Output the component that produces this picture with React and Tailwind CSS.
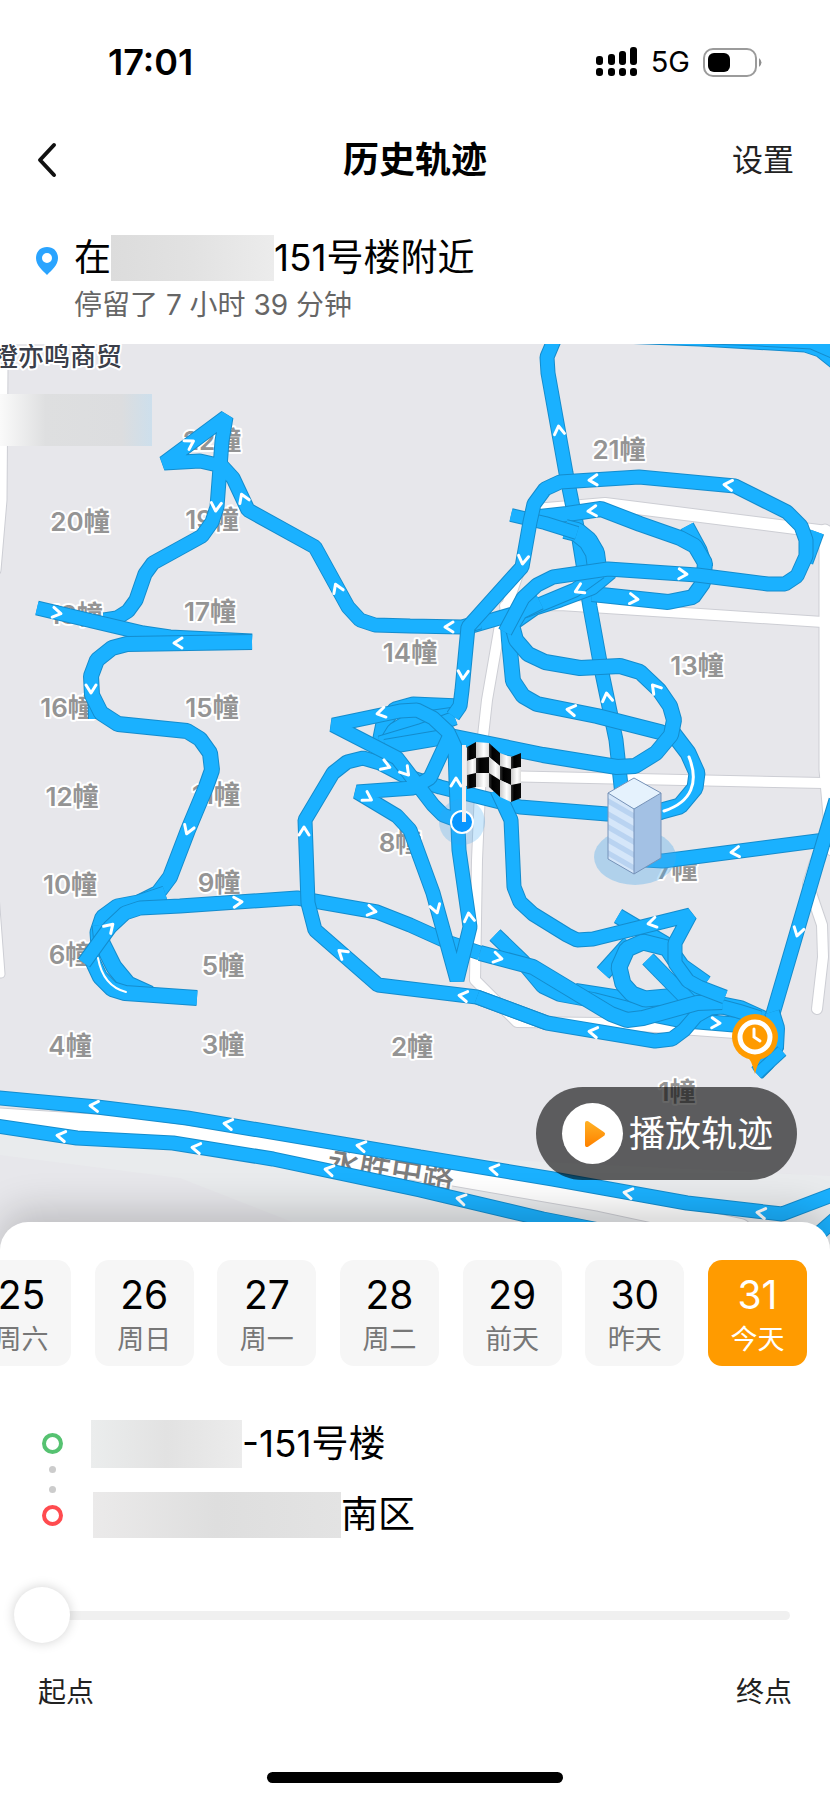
import { useState } from 'react'

const FONT = 'font-["Inter","Noto_Sans_CJK_SC",sans-serif]'

const DAYS = [
    { day: '25', label: '周六' },
    { day: '26', label: '周日' },
    { day: '27', label: '周一' },
    { day: '28', label: '周二' },
    { day: '29', label: '前天' },
    { day: '30', label: '昨天' },
    { day: '31', label: '今天' },
]

const ROADS = [
    { d: 'M2 370 L1 500 L-5 570', w: 11 },
    { d: 'M-5 895 L1 974', w: 7 },
    { d: 'M535 510 L605 504 L827 532', w: 12 },
    { d: 'M825 530 V770 L832 850', w: 11 },
    { d: 'M505 606 L560 605 L700 614 L823 622', w: 10 },
    { d: 'M500 776 L823 783', w: 10 },
    { d: 'M523 560 L500 625 L487 700 L482 745 L477 860 L475 980 L517 1022 L600 1023 L735 1033', w: 10 },
    { d: 'M815 862 L808 884 L822 925 L823 957 L817 1009', w: 10 },
    { d: 'M-10 1119 L117 1127 L283 1150 L450 1174 L600 1200 L740 1230', w: 22 },
]

const LABELS = [
    ['22幢', 212, 441],
    ['21幢', 619, 450],
    ['20幢', 80, 522],
    ['19幢', 212, 520],
    ['18幢', 76, 615],
    ['17幢', 210, 612],
    ['14幢', 410, 653],
    ['13幢', 697, 666],
    ['16幢', 67, 708],
    ['15幢', 212, 708],
    ['12幢', 72, 797],
    ['11幢', 216, 795],
    ['8幢', 400, 843],
    ['10幢', 70, 885],
    ['9幢', 219, 883],
    ['7幢', 677, 870],
    ['6幢', 70, 955],
    ['5幢', 223, 966],
    ['4幢', 70, 1046],
    ['3幢', 223, 1045],
    ['2幢', 412, 1047],
    ['1幢', 677, 1092],
]

// drawn in order, later pieces lie on top
const TRACKS = [
    // north-south line and top edge
    { d: 'M622 795 L616 740 L602 673 L590 607 L577 527 L566 473 L548 373 L547 357 L555 338 L565 328' },
    { d: 'M620 336 L700 339 L805 345 L820 350 L840 366' },
    { d: 'M640 334 L760 339 L812 342 L835 352' },
    // 13 block loops
    { d: 'M687 526 L700 550 L706 568' },
    { d: 'M817 532 L806 562' },
    { d: 'M530 518 L567 514 L601 509 L640 524 L680 538 L695 546 L705 563 L703 583 L693 597 L668 602 L592 594', w: 16 },
    { d: 'M565 529 L577 532 L588 541 L595 553 L597 568 L594 576', w: 20 },
    { d: 'M511 515 L545 523 L577 533', w: 14 },
    { d: 'M611 572 L592 588 L560 600 L535 608 L515 622' },
    { d: 'M600 572 L575 590 L527 610 L468 627' },
    // left route
    { d: 'M480 622 L462 627 L410 626 L375 625 L360 620 L348 607 L315 547 L248 510 L233 478 L222 466 L200 461 L164 463 L226 417 L222 441 L217 507 L212 522 L202 536 L153 563 L145 574 L136 600 L128 611 L117 618 L104 620' },
    { d: 'M37 608 L143 633 L170 637 L252 641' },
    { d: 'M91 685 L92 719', w: 8 },
    { d: 'M252 642 L127 644 L112 648 L97 660 L91 676 L92 695 L101 713 L118 724 L187 731 L200 739 L210 753 L212 770 L206 787 L188 830 L170 877 L158 893 L140 902', w: 16 },
    { d: 'M165 893 L138 902 L117 906 L102 917 L97 932 L98 947' },
    { d: 'M100 925 L102 943 L114 967 L128 984 L150 994', w: 17 },
    { d: 'M197 998 L125 993 L112 989 L100 977 L93 962 L91 950', w: 16 },
    { d: 'M84 963 L110 927 L125 913 L140 908 L180 906 L297 898 L377 912 L410 925 L450 943 L480 953' },
    // south loop
    { d: 'M547 1023 L477 997 L378 985 L315 930 L308 903 L305 820 L333 773 L347 762 L363 758 L380 763 L403 775 L440 787 L500 802 L520 807 L607 814 L663 812' },
    { d: 'M658 812 L680 806 L695 788 L697 773 L688 753 L672 732', w: 17 },
    // centre knot
    { d: 'M378 748 L383 723 L395 709 L413 704 L460 706' },
    { d: 'M387 744 L395 731 L410 722 L452 716', w: 18 },
    { d: 'M380 743 L420 731 L455 718' },
    { d: 'M675 738 L660 732 L597 716 L537 704 L523 696 L513 681 L509 640 L508 625', w: 16 },
    { d: 'M385 747 L450 736 L543 755 L617 767 L635 766 L656 753 L671 735 L674 720 L670 706 L659 690 L640 672 L620 666 L580 668 L545 662 L528 654 L516 640 L512 625 L520 612 L540 602', w: 16 },
    // far east loop, ends at the finish flag
    { d: 'M505 632 L523 598 L537 585 L553 577 L608 569 L697 575 L768 584 L785 584 L797 576 L806 556 L806 540 L801 526 L787 512 L735 486 L639 477 L560 482 L545 489 L534 504 L530 522 L522 567 L468 627 L462 690 L460 706 L453 716' },
    { d: 'M450 735 L430 778 L413 788 L357 792 L397 816 L410 830 L433 893 L457 980 L470 927 L459 850 L456 780 L455 747 L448 732 L433 718 L417 710 L400 711 L333 725 L397 758 L433 805 L443 815 L462 822' },
    // south-east knot
    { d: 'M603 973 L630 943', w: 17 },
    { d: 'M618 916 L667 945 L682 966 L706 983', w: 16 },
    { d: 'M575 992 L620 999 L655 1009 L700 1012', w: 18 },
    { d: 'M495 935 L523 962 L543 986 L560 994 L593 1000 L640 1012 L680 1020 L740 1025 L765 1027', w: 16 },
    { d: 'M690 1008 L715 1004 L740 1009 L762 1019 L774 1033 L775 1050', w: 18 },
    { d: 'M760 1018 L738 1011 L723 1007 L710 1008 L696 1016 L684 1030 L672 1039 L655 1041 L547 1023 L477 997' },
    { d: 'M675 960 L667 948 L643 942 L627 949 L619 967 L623 984 L632 994 L645 999 L667 997 L700 990', w: 17 },
    { d: 'M648 959 L692 1004', w: 16 },
    { d: 'M480 953 L533 967 L611 1014 L627 1020 L643 1018 L697 1003 L722 1002', w: 16 },
    { d: 'M497 790 L511 820 L514 887 L520 902 L533 914 L567 935 L577 940 L593 939 L690 915 L675 943 L675 963 L688 981 L699 987 L725 997' },
    // east line
    { d: 'M840 838 L663 861 L645 860' },
    { d: 'M836 800 L818 860 L772 1017' },
    { d: 'M772 1012 L777 1028 L776 1047 L767 1063 L757 1073', w: 16 },
    { d: 'M782 1051 L757 1074', w: 13 },
    // 永胜中路, both lanes
    { d: 'M-10 1097 L97 1107 L187 1118 L420 1157 L553 1179 L687 1203 L782 1214 L840 1192' },
    { d: 'M-10 1125 L77 1138 L173 1143 L273 1159 L420 1190 L543 1219 L620 1234' },
    { d: 'M840 1215 L800 1250' },
]

// x, y, heading in degrees
const ARROWS = [
    [190, 443, -30], [216, 507, 95], [243, 498, -112], [337, 588, -112], [57, 613, 10], [178, 643, 180],
    [559, 430, -97], [593, 480, 178], [728, 485, -174], [592, 511, 176], [523, 560, 98], [683, 574, 3],
    [634, 599, 6], [579, 590, 155], [449, 627, 180], [463, 675, 93], [91, 689, 90], [188, 830, 110],
    [238, 902, -3], [110, 927, -45], [372, 911, 10], [304, 831, -90], [342, 953, -140], [381, 713, 168],
    [386, 766, 20], [406, 772, 50], [368, 798, 30], [655, 688, -130], [607, 697, -98], [571, 710, -172],
    [456, 782, -90], [735, 852, 174], [436, 909, 73], [469, 917, -97], [498, 958, 12], [463, 996, -172],
    [652, 923, 168], [593, 1032, -172], [716, 1023, 3], [798, 932, 105], [94, 1106, 186], [228, 1124, 188],
    [361, 1146, 190], [61, 1136, 188], [196, 1148, 188], [329, 1170, 191], [494, 1169, 190], [628, 1193, 190],
    [761, 1213, 188], [461, 1199, 192],
]

// column edges of the flag: x and the four row lines
const FLAG = [
    [467, 747, 761, 775, 789],
    [476, 742, 758, 773, 787],
    [489, 743, 757, 773, 787],
    [500, 753, 766, 780, 797],
    [511, 757, 769, 785, 802],
    [521, 753, 767, 783, 798],
]

function Flag() {
    const cells = []
    for (let c = 0; c < 5; c++) {
        for (let r = 1; r < 4; r++) {
            const a = FLAG[c]
            const b = FLAG[c + 1]
            cells.push(
                <path
                    key={`${c}-${r}`}
                    d={`M${a[0]} ${a[r]} L${b[0]} ${b[r]} L${b[0]} ${b[r + 1]} L${a[0]} ${a[r + 1]} Z`}
                    fill={(c + r) % 2 ? 'url(#flagDark)' : 'url(#flagLight)'}
                />
            )
        }
    }
    return (
        <g>
            <circle cx="462" cy="822" r="23" fill="#39a5f0" opacity="0.25" />
            <circle cx="462" cy="822" r="11" fill="#0796ff" stroke="#fff" strokeWidth="2" />
            {cells}
            <path d="M464 745 V822" stroke="#f1eeee" strokeWidth="4" />
        </g>
    )
}

function Building() {
    return (
        <g>
            <path d="M608 793 L634 809 V874 L608 859 Z" fill="#d5e6f9" />
            {[0, 1, 2, 3, 4].map((i) => (
                <path key={i} transform={`translate(0 ${i * 13})`} d="M608 798 L634 813 V819 L608 804 Z" fill="#b9d3f1" />
            ))}
            <path d="M661 793 L634 809 V874 L661 858 Z" fill="#a3c1e4" />
            <path d="M634 778 L661 793 L634 809 L608 793 Z" fill="#e5f2fd" />
            <path
                d="M634 778 L661 793 V858 L634 874 L608 859 V793 Z M608 793 L634 809 L661 793 M634 809 V874"
                fill="none"
                stroke="#7692b8"
                strokeWidth="1"
            />
        </g>
    )
}

function TrackMap() {
    return (
        <svg viewBox="0 344 830 920" className="block w-full bg-[#e7e7eb]" role="img" aria-label="历史轨迹地图">
            <defs>
                <linearGradient id="flagDark">
                    <stop offset="0" stopColor="#333" />
                    <stop offset="0.3" stopColor="#000" />
                    <stop offset="1" stopColor="#0a0a0a" />
                </linearGradient>
                <linearGradient id="flagLight">
                    <stop offset="0" stopColor="#c9c9c9" />
                    <stop offset="0.6" stopColor="#fff" />
                    <stop offset="1" stopColor="#dcdcdc" />
                </linearGradient>
                <linearGradient id="mask">
                    <stop offset="0" stopColor="#fafafa" />
                    <stop offset="0.3" stopColor="#dedfe0" />
                    <stop offset="0.8" stopColor="#dcdddf" />
                    <stop offset="1" stopColor="#cddfec" />
                </linearGradient>
            </defs>

            <path d="M0 1120 L283 1148 L600 1165 L830 1176 V1264 H400 L180 1178 L0 1155 Z" fill="#e9ebed" />
            {ROADS.map((road) => (
                <path key={road.d} d={road.d} fill="none" stroke="#cdced4" strokeWidth={road.w + 2} strokeLinejoin="round" strokeLinecap="round" />
            ))}
            {ROADS.map((road) => (
                <path key={road.d} d={road.d} fill="none" stroke="#fff" strokeWidth={road.w} strokeLinejoin="round" strokeLinecap="round" />
            ))}

            <g fontSize="26" fontWeight="600" fill="#949494" stroke="#fff" strokeWidth="4" paintOrder="stroke" strokeLinejoin="round">
                {LABELS.map(([name, x, y]) => (
                    <text key={name} x={x} y={y + 9} textAnchor="middle">{name}</text>
                ))}
                <text x="122" y="366" textAnchor="end" fontWeight="500" fill="#3a3e49">橙亦鸣商贸</text>
                <text x="326" y="1170" fontSize="32" fontWeight="500" fill="#7d7d7d" transform="rotate(9 326 1170)">永胜中路</text>
            </g>
            <rect x="0" y="394" width="152" height="52" fill="url(#mask)" />

            {TRACKS.map(({ d, w = 15 }) => (
                <g key={d} fill="none" strokeLinejoin="bevel">
                    <path d={d} stroke="#148ccd" strokeWidth={w} />
                    <path d={d} stroke="#1ab1ff" strokeWidth={w - 2} />
                </g>
            ))}
            <ellipse cx="635" cy="857" rx="41" ry="28" fill="#4aa9ea" opacity="0.35" />
            <g fill="none" stroke="#fff" strokeLinecap="round">
                <path d="M98 958 Q103 986 126 992" strokeWidth="2" />
                <path d="M689 757 C699 782 692 802 664 811" strokeWidth="3" />
                {ARROWS.map(([x, y, deg]) => (
                    <path
                        key={`${x}-${y}`}
                        d="M-4 -5 L4 0 L-4 5"
                        strokeWidth="3"
                        strokeLinejoin="round"
                        transform={`translate(${x} ${y}) rotate(${deg})`}
                    />
                ))}
            </g>

            <Building />
            <Flag />
            <g>
                <path d="M744 1052 Q752 1060 755 1074 Q758 1060 766 1052 Z" fill="#ff9b00" />
                <circle cx="755" cy="1037" r="23" fill="#ff9b00" />
                <circle cx="755" cy="1037" r="15" fill="none" stroke="#fff" strokeWidth="5" />
                <path d="M754 1029 V1037 L760 1041" fill="none" stroke="#fff" strokeWidth="3" strokeLinecap="round" />
            </g>
        </svg>
    )
}

function StatusBar() {
    return (
        <div className="flex h-[124px] items-center justify-between pl-[108px] pr-[68px] text-black">
            <span className="text-[36px] font-semibold">17:01</span>
            <div className="flex items-center gap-[13px]">
                <svg width="42" height="30" viewBox="0 0 42 30">
                    <rect x="0" y="9" width="7" height="9" rx="3" />
                    <rect x="12" y="7" width="7" height="11" rx="3" />
                    <rect x="23" y="4" width="7" height="14" rx="3" />
                    <rect x="34" y="0" width="7" height="18" rx="3" />
                    <rect x="0" y="21" width="7" height="8" rx="3" />
                    <rect x="12" y="21" width="7" height="8" rx="3" />
                    <rect x="23" y="21" width="7" height="8" rx="3" />
                    <rect x="34" y="21" width="7" height="8" rx="3" />
                </svg>
                <span className="text-[29px]">5G</span>
                <svg width="59" height="29" viewBox="0 0 59 29">
                    <rect x="1" y="1" width="52" height="27" rx="9" fill="none" stroke="#9b9b9b" strokeWidth="2" />
                    <rect x="5" y="5" width="22" height="19" rx="6" />
                    <path d="M56 10 Q61 14.5 56 19 Z" fill="#8f8f8f" />
                </svg>
            </div>
        </div>
    )
}

function App() {
    const [selected, setSelected] = useState('31')
    const [progress, setProgress] = useState(0)

    return (
        <div className={`${FONT} flex min-h-screen flex-col overflow-x-hidden bg-white text-black`} lang="zh-CN">
            <StatusBar />

            <header className="grid h-[72px] grid-cols-3 items-center px-9">
                <button type="button" aria-label="返回" className="justify-self-start">
                    <svg width="22" height="36" viewBox="0 0 22 36" fill="none" stroke="#111" strokeWidth="4" strokeLinecap="round" strokeLinejoin="round">
                        <path d="M18 3 L4 18 L18 33" />
                    </svg>
                </button>
                <h1 className="justify-self-center text-[36px] font-bold leading-[48px]">历史轨迹</h1>
                <button type="button" className="justify-self-end text-[31px] leading-[48px] text-[#222]">设置</button>
            </header>

            <section className="flex h-[148px] gap-[15px] pl-[35px] pt-9">
                <svg className="mt-[14px] shrink-0" width="24" height="30" viewBox="0 0 24 30">
                    <path fillRule="evenodd" fill="#2aa4ff" d="M12 1 C5 1 1 6 1 12 C1 19 7 24 12 29 C17 24 23 19 23 12 C23 6 19 1 12 1 Z M12 7 A5 5 0 1 1 12 17 A5 5 0 1 1 12 7 Z" />
                </svg>
                <div>
                    <p className="flex h-[52px] items-center text-[37px]">
                        在
                        <span className="h-[46px] w-[163px] bg-linear-to-r from-[#dcdcdc] via-[#e2e2e2] to-[#ececec]" />
                        151号楼附近
                    </p>
                    <p className="text-[28px] leading-[42px] text-[#666]">停留了 7 小时 39 分钟</p>
                </div>
            </section>

            <main className="relative">
                <TrackMap />
                <button
                    type="button"
                    className="absolute bottom-[84px] right-[33px] flex h-[93px] w-[261px] items-center gap-[6px] rounded-full bg-black/60 pl-[26px] text-[36px] text-white"
                >
                    <span className="flex size-[61px] shrink-0 items-center justify-center rounded-full bg-white">
                        <svg className="ml-1" width="22" height="28" viewBox="0 0 22 28">
                            <defs>
                                <linearGradient id="play" x2="0" y2="1">
                                    <stop offset="0" stopColor="#ffae22" />
                                    <stop offset="1" stopColor="#ff8400" />
                                </linearGradient>
                            </defs>
                            <path d="M3 3 L19 14 L3 25 Z" fill="url(#play)" stroke="url(#play)" strokeWidth="4" strokeLinejoin="round" />
                        </svg>
                    </span>
                    播放轨迹
                </button>
            </main>

            <section className="relative -mt-[42px] flex grow flex-col rounded-t-[28px] bg-white pt-[38px] shadow-[0_-10px_40px_rgba(0,0,0,0.2)]">
                <div className="-ml-7 mr-[23px] flex justify-between">
                    {DAYS.map(({ day, label }) => (
                        <button
                            key={day}
                            type="button"
                            onClick={() => setSelected(day)}
                            className={`flex h-[106px] w-[99px] flex-col items-center rounded-[14px] pt-3 ${
                                selected === day ? 'bg-[#ff9b00] text-white' : 'bg-[#f6f6f6]'
                            }`}
                        >
                            <span className="text-[39px] leading-[46px]">{day}</span>
                            <span className={`text-[27px] leading-[44px] ${selected === day ? '' : 'text-[#777]'}`}>{label}</span>
                        </button>
                    ))}
                </div>

                <div className="mt-[54px] flex gap-[28px] pl-[42px] text-[37px] leading-[48px]">
                    <div className="flex flex-col items-center justify-between py-[13px]">
                        <span className="size-[21px] rounded-full border-4 border-[#56c271]" />
                        <span className="size-[7px] rounded-full bg-[#ccc]" />
                        <span className="size-[7px] rounded-full bg-[#ccc]" />
                        <span className="size-[21px] rounded-full border-4 border-[#ff4b4f]" />
                    </div>
                    <div className="flex flex-col gap-[23px]">
                        <p className="flex items-center">
                            <span className="h-[48px] w-[151px] bg-linear-to-r from-[#ebeded] via-[#e2e2e2] to-[#ececec]" />
                            -151号楼
                        </p>
                        <p className="flex items-center pl-[2px]">
                            <span className="h-[46px] w-[248px] bg-linear-to-r from-[#ebeaea] via-[#dedede] to-[#e3e3e3]" />
                            南区
                        </p>
                    </div>
                </div>

                <input
                    type="range"
                    aria-label="播放进度"
                    min="0"
                    max="100"
                    value={progress}
                    onChange={(e) => setProgress(Number(e.target.value))}
                    className="ml-[14px] mr-10 mt-12 h-[56px] appearance-none bg-transparent [&::-webkit-slider-runnable-track]:h-[9px] [&::-webkit-slider-runnable-track]:rounded-full [&::-webkit-slider-runnable-track]:bg-[#f0f0f0] [&::-webkit-slider-thumb]:-mt-[24px] [&::-webkit-slider-thumb]:size-[56px] [&::-webkit-slider-thumb]:appearance-none [&::-webkit-slider-thumb]:rounded-full [&::-webkit-slider-thumb]:bg-white [&::-webkit-slider-thumb]:shadow-[0_0_12px_rgba(0,0,0,0.18)]"
                />
                <div className="mt-7 flex justify-between px-[38px] text-[28px] leading-[42px] text-[#222]">
                    <span>起点</span>
                    <span>终点</span>
                </div>

                <div className="mx-auto mb-[17px] mt-auto h-[11px] w-[296px] rounded-full bg-black" />
            </section>
        </div>
    )
}

export default App
